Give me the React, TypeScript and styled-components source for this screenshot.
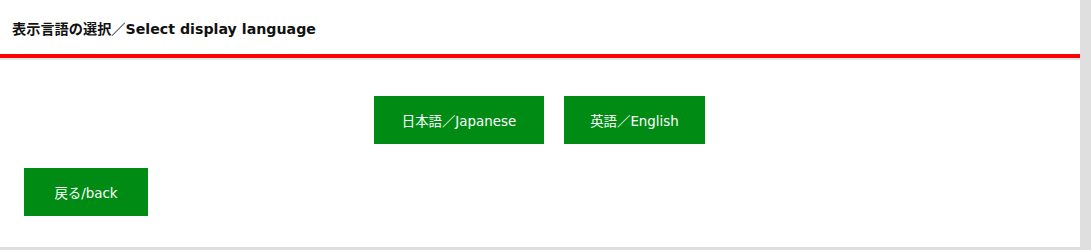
import React from "react";
import styled, { createGlobalStyle } from "styled-components";

const GlobalStyle = createGlobalStyle`
  html, body {
    margin: 0;
    padding: 0;
    background: #dfdfdf;
  }
  body {
    font-family: "DejaVu Sans", "Noto Sans CJK JP", sans-serif;
  }
`;

const Page = styled.div`
  width: 1080px;
  height: 247px;
  background: #ffffff;
`;

const Header = styled.header`
  height: 54px;
  display: flex;
  align-items: center;
  padding: 0 12px;
  border-bottom: 4px solid #ff0000;
  box-shadow: 0 2px 0 #e6e6e6;
`;

const Title = styled.h1`
  margin: 0;
  padding-top: 2px;
  font-family: "DejaVu Sans", "Noto Sans CJK JP", sans-serif;
  font-size: 14.2px;
  font-weight: bold;
  color: #111111;
`;

const Body = styled.main`
  padding: 38px 24px 0;
  display: flex;
  flex-direction: column;
  gap: 24px;
`;

const LangRow = styled.div`
  display: flex;
  justify-content: center;
  gap: 20px;
  margin-right: 1px;
`;

const Button = styled.button<{ $width: number }>`
  width: ${(p) => p.$width}px;
  height: 48px;
  padding: 0;
  border: none;
  border-radius: 0;
  background: #008c14;
  color: #ffffff;
  font-family: "DejaVu Sans", "Noto Sans CJK JP", sans-serif;
  font-size: 13.4px;
  cursor: pointer;
  &:hover {
    background: #007a11;
  }
`;

const BackRow = styled.div`
  display: flex;
`;

export default function App() {
  return (
    <>
      <GlobalStyle />
      <Page>
        <Header>
          <Title>表示言語の選択／Select display language</Title>
        </Header>
        <Body>
          <LangRow>
            <Button $width={170}>日本語／Japanese</Button>
            <Button $width={141}>英語／English</Button>
          </LangRow>
          <BackRow>
            <Button $width={124}>戻る/back</Button>
          </BackRow>
        </Body>
      </Page>
    </>
  );
}
